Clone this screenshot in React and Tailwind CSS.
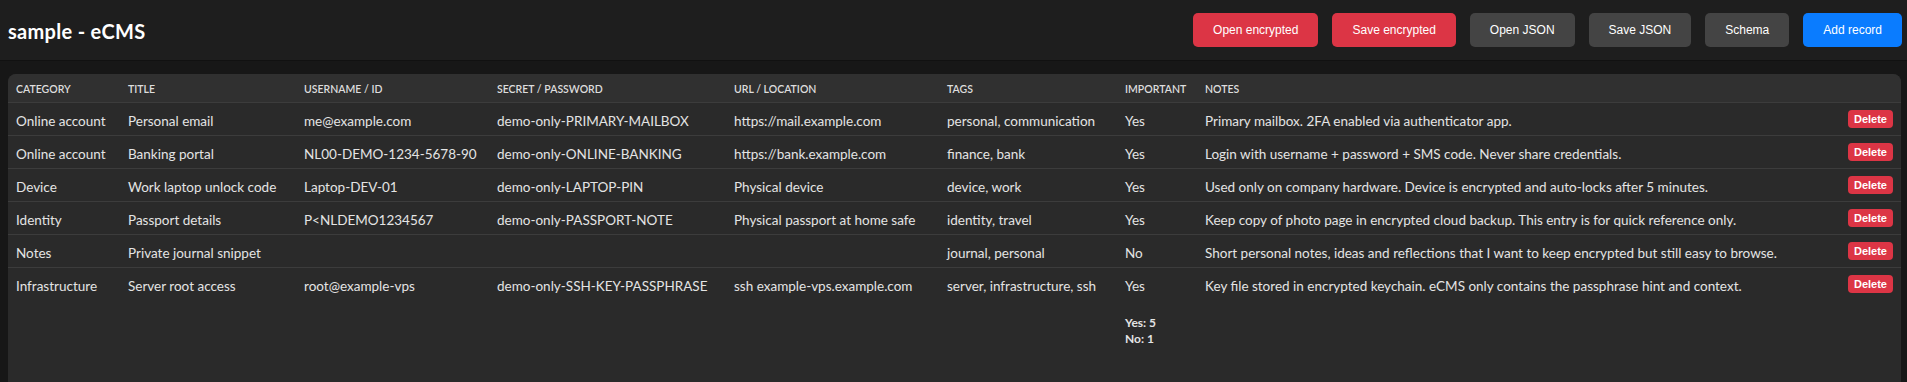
import React from "react";

const rows = [
  ["Online account", "Personal email", "me@example.com", "demo-only-PRIMARY-MAILBOX", "https://mail.example.com", "personal, communication", "Yes", "Primary mailbox. 2FA enabled via authenticator app."],
  ["Online account", "Banking portal", "NL00-DEMO-1234-5678-90", "demo-only-ONLINE-BANKING", "https://bank.example.com", "finance, bank", "Yes", "Login with username + password + SMS code. Never share credentials."],
  ["Device", "Work laptop unlock code", "Laptop-DEV-01", "demo-only-LAPTOP-PIN", "Physical device", "device, work", "Yes", "Used only on company hardware. Device is encrypted and auto-locks after 5 minutes."],
  ["Identity", "Passport details", "P<NLDEMO1234567", "demo-only-PASSPORT-NOTE", "Physical passport at home safe", "identity, travel", "Yes", "Keep copy of photo page in encrypted cloud backup. This entry is for quick reference only."],
  ["Notes", "Private journal snippet", "", "", "", "journal, personal", "No", "Short personal notes, ideas and reflections that I want to keep encrypted but still easy to browse."],
  ["Infrastructure", "Server root access", "root@example-vps", "demo-only-SSH-KEY-PASSPHRASE", "ssh example-vps.example.com", "server, infrastructure, ssh", "Yes", "Key file stored in encrypted keychain. eCMS only contains the passphrase hint and context."],
];

const headers = ["Category", "Title", "Username / ID", "Secret / Password", "URL / Location", "Tags", "Important", "Notes", ""];
const widths = ["w-[112px]", "w-[176px]", "w-[193px]", "w-[237px]", "w-[213px]", "w-[178px]", "w-[80px]", "w-[645px]", "w-[59px]"];

const btn = "h-[34px] px-5 rounded-[5px] text-[12px] text-white font-['Liberation_Sans',Arial,sans-serif]";

export default function App() {
  return (
    <div className="min-h-screen bg-[#171717] text-[#e4e4e4] font-['Lato','Open_Sans',sans-serif]">
      <header className="h-[61px] bg-[#1e1e1e] border-b border-[#111111] flex items-center justify-between pl-2 pr-[5px]">
        <h1 className="text-[20px] font-bold text-white tracking-[0.3px] pt-[2px]">sample - eCMS</h1>
        <div className="flex items-center gap-[14px]">
          <button className={`${btn} bg-[#dc3545]`}>Open encrypted</button>
          <button className={`${btn} bg-[#dc3545]`}>Save encrypted</button>
          <button className={`${btn} bg-[#444444]`}>Open JSON</button>
          <button className={`${btn} bg-[#444444]`}>Save JSON</button>
          <button className={`${btn} bg-[#444444]`}>Schema</button>
          <button className={`${btn} bg-[#0a7cff]`}>Add record</button>
        </div>
      </header>
      <main className="pt-[13px] pl-2 pr-[6px]">
        <div className="h-[330px] rounded-[8px] bg-[#2a2a2a] overflow-hidden">
          <table className="w-full table-fixed border-collapse text-left">
            <thead>
              <tr className="bg-[#303030] border-b border-[#3c3c3c]">
                {headers.map((h, i) => (
                  <th key={i} className={`${widths[i]} px-2 pt-[9px] pb-[7px] text-[10.5px] leading-3 font-semibold uppercase text-[#dddddd]`}>{h}</th>
                ))}
              </tr>
            </thead>
            <tbody>
              {rows.map((r, ri) => (
                <tr key={ri} className={ri < rows.length - 1 ? "border-b border-[#3c3c3c]" : ""}>
                  {r.map((c, ci) => (
                    <td key={ci} className="px-2 pt-[10px] pb-[6px] text-[13.5px] leading-4 whitespace-nowrap align-middle">{c}</td>
                  ))}
                  <td className="px-2 py-0 align-middle">
                    <div className="flex justify-end">
                      <button className="h-[18px] px-[6px] rounded-[4px] bg-[#dc3545] text-white text-[11px] font-bold font-['Liberation_Sans',Arial,sans-serif] leading-[18px]">Delete</button>
                    </div>
                  </td>
                </tr>
              ))}
            </tbody>
            <tfoot>
              <tr>
                <td colSpan={6}></td>
                <td className="px-2 pt-[15px] text-[12px] leading-4 font-bold">
                  <div>Yes: 5</div>
                  <div>No: 1</div>
                </td>
                <td colSpan={2}></td>
              </tr>
            </tfoot>
          </table>
        </div>
      </main>
    </div>
  );
}
